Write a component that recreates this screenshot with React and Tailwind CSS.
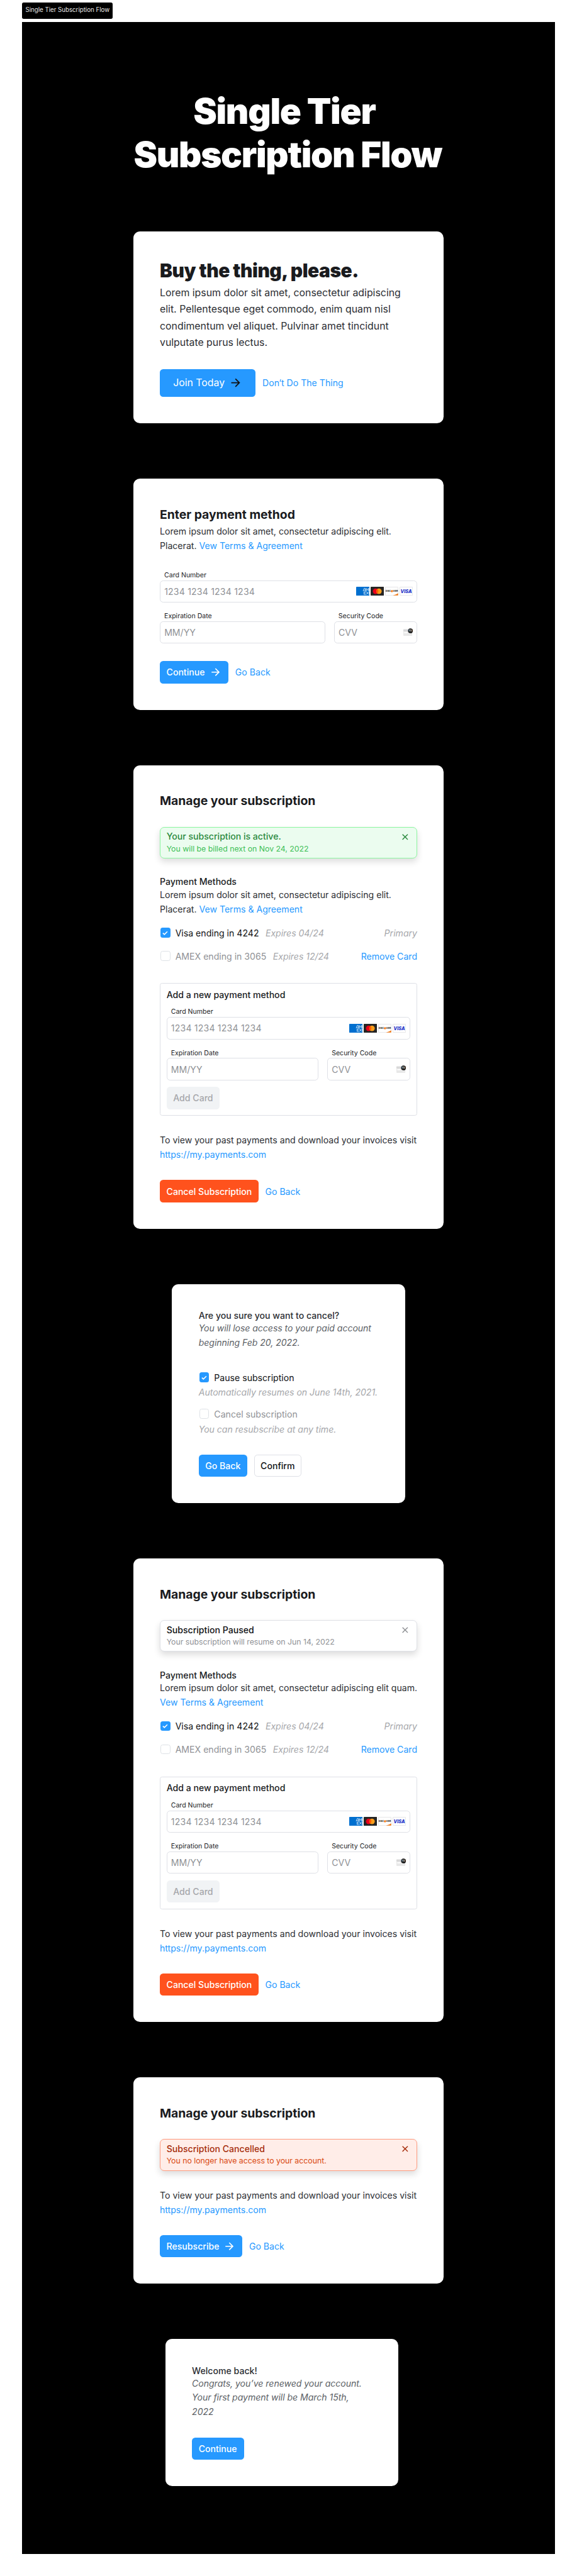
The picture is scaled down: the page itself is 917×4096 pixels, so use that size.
import React from "react";

const link = "text-[#2699ff]";

function ArrowRight({ className }) {
  return (
    <svg viewBox="0 0 24 24" fill="currentColor" className={className}>
      <path d="M16.172 11l-5.364-5.364 1.414-1.414L20 12l-7.778 7.778-1.414-1.414L16.172 13H4v-2z" />
    </svg>
  );
}

function Close({ className }) {
  return (
    <svg viewBox="0 0 24 24" fill="currentColor" className={className}>
      <path d="M12 10.586l4.95-4.95 1.414 1.414-4.95 4.95 4.95 4.95-1.414 1.414-4.95-4.95-4.95 4.95-1.414-1.414 4.95-4.95-4.95-4.95L7.05 5.636z" />
    </svg>
  );
}

function Amex() {
  return (
    <svg viewBox="0 0 24 16" className="h-4 w-6">
      <rect width="24" height="16" rx="1" fill="#006fcf" />
      <g fill="none" stroke="#fff" strokeWidth="0.8">
        <path d="M12.4 8L14.6 2.6h1.2L18 8M13.4 6.2h3.4M18 8V2.8l2 3.4 2-3.4V8M23.6 2.6v5" />
        <path d="M18 8.8h-3.8v5H18M14.4 11.2h3.2M18.4 8.8l4 5M22.6 8.8l-4.2 5M23.6 9v5" />
      </g>
    </svg>
  );
}

function Mastercard() {
  return (
    <svg viewBox="0 0 24 16" className="h-4 w-6">
      <rect width="24" height="16" rx="1" fill="#252525" />
      <circle cx="9" cy="8" r="5" fill="#eb001b" />
      <circle cx="15" cy="8" r="5" fill="#f79e1b" />
      <path d="M12 4a5 5 0 0 1 0 8a5 5 0 0 1 0-8z" fill="#ff5f00" />
    </svg>
  );
}

function Discover() {
  return (
    <svg viewBox="0 0 24 16" className="h-4 w-6">
      <rect x="0.5" y="0.5" width="23" height="15" rx="0.8" fill="#fff" stroke="#e0e0e3" />
      <path d="M23.5 11.6V15q0 .6-.6.6H14q6-1.2 9.5-4z" fill="#f27712" />
      <text x="0.9" y="9.6" fontSize="4.5" fontWeight="700" fill="#222" textLength="9.4" lengthAdjust="spacingAndGlyphs" className="font-['Inter',sans-serif]">DISC</text>
      <circle cx="12.3" cy="8" r="1.9" fill="#f27712" />
      <text x="14.2" y="9.6" fontSize="4.5" fontWeight="700" fill="#222" textLength="9" lengthAdjust="spacingAndGlyphs" className="font-['Inter',sans-serif]">VER</text>
    </svg>
  );
}

function Visa() {
  return (
    <svg viewBox="0 0 24 16" className="h-4 w-6">
      <rect x="0.5" y="0.5" width="23" height="15" rx="0.8" fill="#fff" stroke="#e0e0e3" />
      <text x="1.8" y="11.2" fontSize="8.8" fontWeight="800" fontStyle="italic" fill="#1a30c8" textLength="20.4" lengthAdjust="spacingAndGlyphs" className="font-['Inter',sans-serif]">VISA</text>
    </svg>
  );
}

function CvvIcon() {
  return (
    <svg viewBox="0 0 17 14" className="h-3.5 w-[17px]">
      <rect x="0" y="1" width="16" height="12.5" rx="1" fill="#e8e8e8" />
      <rect x="0" y="3" width="16" height="2.2" fill="#d2d2d4" />
      <rect x="1.5" y="7" width="6" height="1.8" fill="#fff" />
      <circle cx="12.8" cy="4.6" r="4.3" fill="#161616" />
      <text x="10" y="6.2" fontSize="4" fontWeight="600" fill="#fff" textLength="5.6" lengthAdjust="spacingAndGlyphs" className="font-['Inter',sans-serif]">123</text>
    </svg>
  );
}

function Card({ className = "w-[560px]", children }) {
  return <section className={`flex flex-col rounded-xl bg-white p-12 ${className}`}>{children}</section>;
}

function Heading({ children }) {
  return <h2 className="text-[22px] leading-[33px] font-bold tracking-[-0.001em] text-[#1a1b1e]">{children}</h2>;
}

function Text({ className = "", children }) {
  return <p className={`leading-[26px] whitespace-nowrap text-[#2c2e33] ${className}`}>{children}</p>;
}

function Button({ className, children }) {
  return (
    <button className={`flex h-10 shrink-0 items-center rounded-md px-3 font-medium whitespace-nowrap ${className}`}>
      {children}
    </button>
  );
}

function Field({ label, placeholder, className = "", placeholderClass = "", children }) {
  return (
    <label className={`flex flex-col ${className}`}>
      <span className="pl-2 text-xs leading-[18px] text-[#1a1b1e]">{label}</span>
      <span className="flex h-10 items-center justify-between rounded-md border border-[#dee0e6] px-[7px]">
        <span className={`text-[#909296] ${placeholderClass}`}>{placeholder}</span>
        {children}
      </span>
    </label>
  );
}

function CardFields() {
  return (
    <div className="flex flex-col gap-4">
      <Field label="Card Number" placeholder="1234 1234 1234 1234" placeholderClass="tracking-[0.013em]">
        <span className="flex gap-0.5">
          <Amex />
          <Mastercard />
          <Discover />
          <Visa />
        </span>
      </Field>
      <div className="flex gap-4">
        <Field label="Expiration Date" placeholder="MM/YY" className="grow" />
        <Field label="Security Code" placeholder="CVV" className="w-[150px]">
          <CvvIcon />
        </Field>
      </div>
    </div>
  );
}

function Checkbox({ checked }) {
  if (!checked) return <span className="mx-px size-[18px] rounded border border-[#dee2e6] bg-white" />;
  return (
    <span className="mx-px flex size-[18px] items-center justify-center rounded bg-[#2699ff]">
      <svg viewBox="0 0 10 8" className="h-2 w-2.5" fill="none" stroke="#fff" strokeWidth="1.8">
        <path d="M1 4.2L3.7 6.6L9 1.4" />
      </svg>
    </span>
  );
}

function Option({ checked, label, note, children }) {
  return (
    <div className="flex h-[26px] items-center">
      <Checkbox checked={checked} />
      <span className={`ml-2 ${checked ? "text-[#101113]" : "text-[#909296]"}`}>{label}</span>
      {note && <span className="ml-3 tracking-[-0.004em] text-[#a6a7ab] italic">{note}</span>}
      {children}
    </div>
  );
}

const tones = {
  green: ["border-[#8cf5a0] bg-[#ebfcef]", "text-[#2b8a3e]", "text-[#40c057]", "text-[#2b8a3e]"],
  plain: ["border-[#dee0e6] bg-white", "text-[#101113]", "text-[#909296]", "text-[#909296]"],
  red: ["border-[#ff9c80] bg-[#ffede8]", "text-[#a62d0c]", "text-[#d9480f]", "text-[#a62d0c]"],
};

function Banner({ tone, title, note }) {
  const [box, titleColor, noteColor, iconColor] = tones[tone];
  return (
    <div className={`mt-[30px] flex h-[57px] justify-between rounded-lg border px-[11px] pt-[5px] shadow-[0_6px_12px_-1px_rgba(0,0,0,0.14)] ${box}`}>
      <div>
        <div className={`leading-[22px] font-medium ${titleColor}`}>{title}</div>
        <div className={`text-sm leading-[22px] tracking-[-0.002em] ${noteColor}`}>{note}</div>
      </div>
      <Close className={`mt-0.5 size-5 ${iconColor}`} />
    </div>
  );
}

function PastPayments() {
  return (
    <Text className="mt-8">
      To view your past payments and download your invoices visit
      <br />
      <a className={link}>https://my.payments.com</a>
    </Text>
  );
}

function ManageCard({ banner, children }) {
  return (
    <Card>
      <Heading>Manage your subscription</Heading>
      {banner}
      <h3 className="mt-8 leading-[21px] font-medium text-[#1a1b1e]">Payment Methods</h3>
      <Text>{children}</Text>
      <div className="mt-4 flex flex-col gap-4">
        <Option checked label="Visa ending in 4242" note="Expires 04/24">
          <span className="ml-auto text-[#a6a7ab] italic">Primary</span>
        </Option>
        <Option label="AMEX ending in 3065" note="Expires 12/24">
          <a className="ml-auto text-[#2699ff]">Remove Card</a>
        </Option>
      </div>
      <div className="mt-9 flex flex-col gap-3 rounded border border-[#dee0e6] p-[11px]">
        <h3 className="leading-[19px] font-medium text-[#1a1b1e]">Add a new payment method</h3>
        <CardFields />
        <Button className="w-24 bg-[#f1f3f5] text-[#a6a7ab]">Add Card</Button>
      </div>
      <PastPayments />
      <div className="mt-8 flex items-center gap-3">
        <Button className="w-[178px] bg-[#ff521d] text-white">Cancel Subscription</Button>
        <a className={link}>Go Back</a>
      </div>
    </Card>
  );
}

export default function App() {
  return (
    <div className="bg-white font-['Inter',sans-serif] text-base antialiased [zoom:0.8815]">
      <div className="flex h-[4646px] flex-col px-10 pt-1">
        <div className="flex h-[30px] w-[163px] items-center rounded-[3px] bg-black px-1.5 text-[11px] whitespace-nowrap text-[#e9e9e9]">
          Single Tier Subscription Flow
        </div>
        <main className="mt-1.5 flex h-[4567px] flex-col items-center gap-[100px] bg-black pt-[122px]">
          <h1 className="mb-px h-[155px] text-center text-[64px] leading-[78px] font-black tracking-[-0.023em] whitespace-nowrap text-white">
            <span className="pr-[15px]">Single Tier</span>
            <br />
            <span className="pr-[3px]">Subscription Flow</span>
          </h1>

          <Card>
            <h2 className="text-[34px] leading-[44px] font-black tracking-[-0.016em] whitespace-nowrap text-[#1a1b1e]">
              Buy the thing, please.
            </h2>
            <p className="mt-1 text-lg leading-[30px] whitespace-nowrap text-[#2c2e33]">
              Lorem ipsum dolor sit amet, consectetur adipiscing
              <br />
              elit. Pellentesque eget commodo, enim quam nisl
              <br />
              condimentum vel aliquet. Pulvinar amet tincidunt
              <br />
              vulputate purus lectus.
            </p>
            <div className="mt-8 flex items-center gap-3">
              <button className="flex h-[50px] w-[173px] items-center justify-between rounded-md bg-[#2699ff] px-6 text-lg whitespace-nowrap text-white">
                Join Today
                <ArrowRight className="size-6 text-[#101113]" />
              </button>
              <a className={link}>Don‘t Do The Thing</a>
            </div>
          </Card>

          <Card>
            <Heading>Enter payment method</Heading>
            <Text className="mt-px mb-[31px]">
              Lorem ipsum dolor sit amet, consectetur adipiscing elit.
              <br />
              Placerat. <a className={link}>Vew Terms &amp; Agreement</a>
            </Text>
            <CardFields />
            <div className="mt-8 flex items-center gap-3">
              <Button className="w-[124px] justify-between bg-[#2699ff] text-white">
                Continue
                <ArrowRight className="size-[22px]" />
              </Button>
              <a className={link}>Go Back</a>
            </div>
          </Card>

          <ManageCard
            banner={<Banner tone="green" title="Your subscription is active." note="You will be billed next on Nov 24, 2022" />}
          >
            Lorem ipsum dolor sit amet, consectetur adipiscing elit.
            <br />
            Placerat. <a className={link}>Vew Terms &amp; Agreement</a>
          </ManageCard>

          <Card className="w-[420px]">
            <h3 className="leading-[19px] font-medium text-[#2c2e33]">Are you sure you want to cancel?</h3>
            <p className="leading-[26px] tracking-[-0.004em] whitespace-nowrap text-[#5c5f66] italic">
              You will lose access to your paid account
              <br />
              beginning Feb 20, 2022.
            </p>
            <div className="mt-9 flex flex-col gap-3">
              <div className="flex flex-col gap-0.5">
                <Option checked label="Pause subscription" />
                <p className="leading-[26px] tracking-[-0.002em] whitespace-nowrap text-[#a6a7ab] italic">Automatically resumes on June 14th, 2021.</p>
              </div>
              <div className="flex flex-col gap-0.5">
                <Option label="Cancel subscription" />
                <p className="leading-[26px] tracking-[-0.002em] whitespace-nowrap text-[#a6a7ab] italic">You can resubscribe at any time.</p>
              </div>
            </div>
            <div className="mt-8 flex gap-3">
              <Button className="w-[88px] bg-[#2699ff] text-white">Go Back</Button>
              <Button className="w-[85px] justify-center border border-[#dee0e6] text-[#101113]">Confirm</Button>
            </div>
          </Card>

          <ManageCard
            banner={<Banner tone="plain" title="Subscription Paused" note="Your subscription will resume on Jun 14, 2022" />}
          >
            Lorem ipsum dolor sit amet, consectetur adipiscing elit quam.
            <br />
            <a className={link}>Vew Terms &amp; Agreement</a>
          </ManageCard>

          <Card>
            <Heading>Manage your subscription</Heading>
            <Banner tone="red" title="Subscription Cancelled" note="You no longer have access to your account." />
            <PastPayments />
            <div className="mt-8 flex items-center gap-3">
              <Button className="w-[149px] justify-between bg-[#2699ff] text-white">
                Resubscribe
                <ArrowRight className="size-[22px]" />
              </Button>
              <a className={link}>Go Back</a>
            </div>
          </Card>

          <Card className="mr-6 w-[420px]">
            <h3 className="leading-[19px] font-medium text-[#2c2e33]">Welcome back!</h3>
            <p className="leading-[26px] tracking-[-0.004em] whitespace-nowrap text-[#5c5f66] italic">
              Congrats, you’ve renewed your account.
              <br />
              Your first payment will be March 15th,
              <br />
              2022
            </p>
            <Button className="mt-8 w-[94px] bg-[#2699ff] text-white">Continue</Button>
          </Card>
        </main>
      </div>
    </div>
  );
}
